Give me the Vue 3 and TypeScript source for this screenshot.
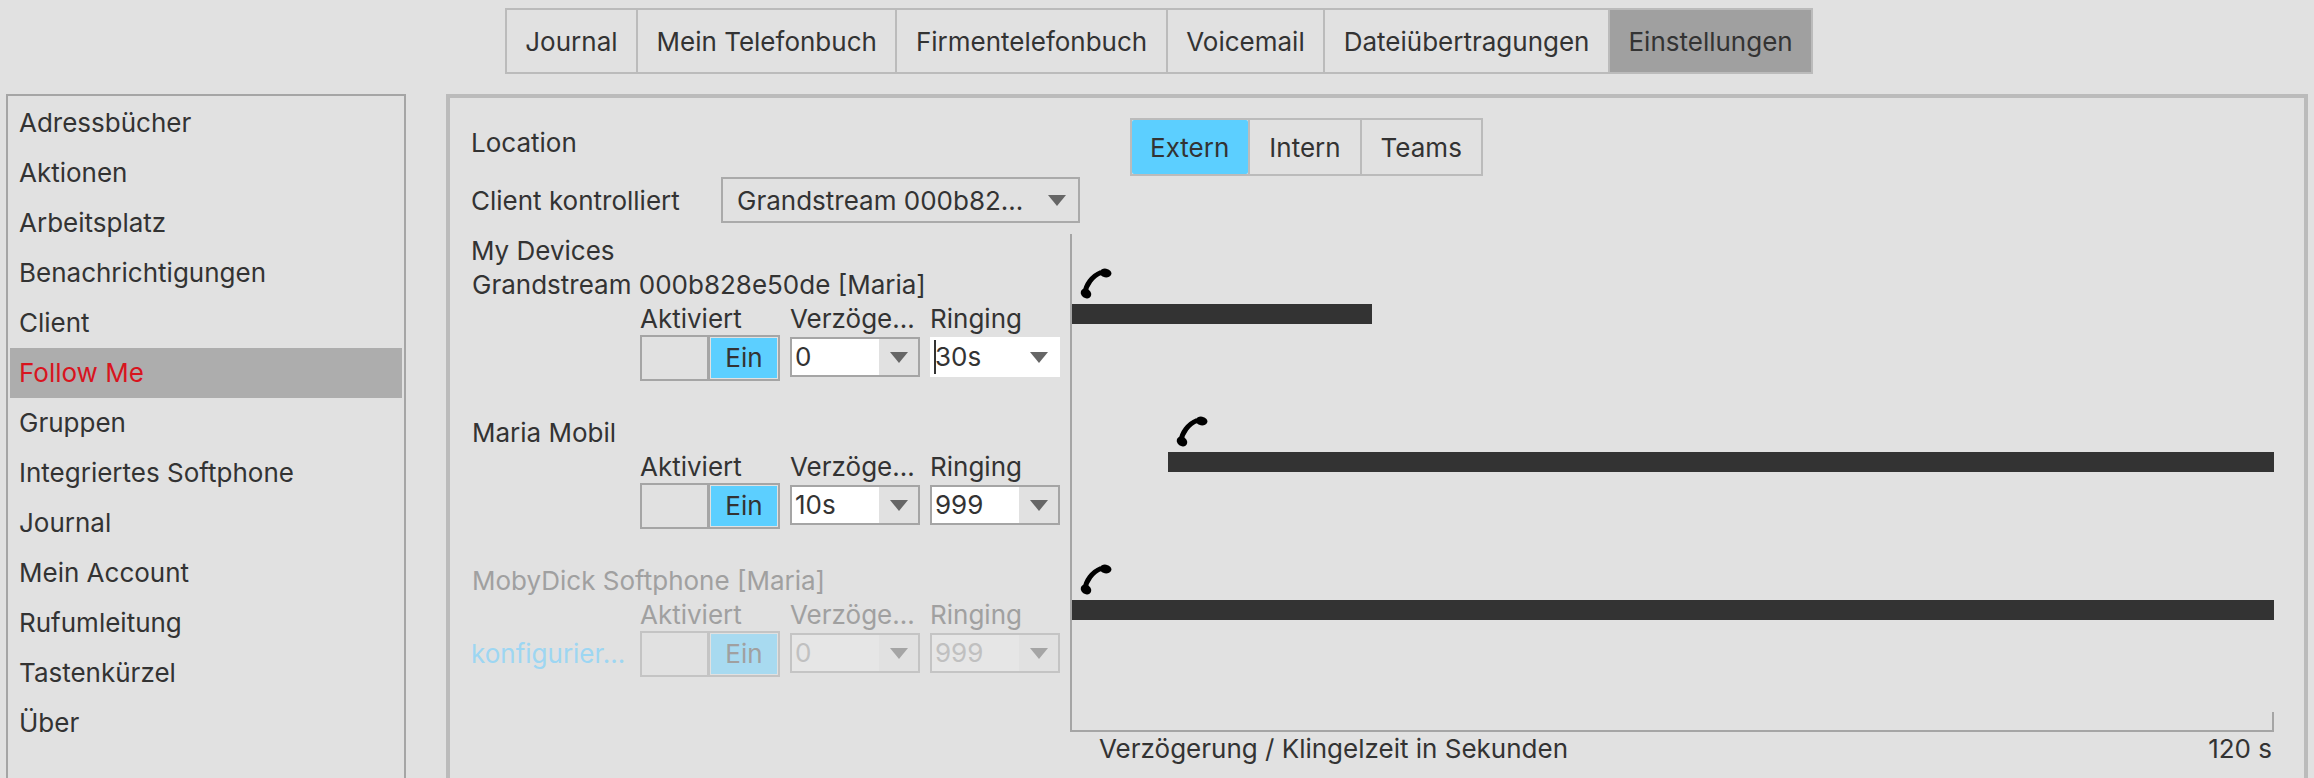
<script setup lang="ts">
interface Device {
  name: string
  delay: string
  ringing: string
  offset: number
  length: number
  focused?: boolean
  disabled?: boolean
  action?: string
}

const tabs = ['Journal', 'Mein Telefonbuch', 'Firmentelefonbuch', 'Voicemail', 'Dateiübertragungen', 'Einstellungen']
const scopes = ['Extern', 'Intern', 'Teams']
const menu = [
  'Adressbücher',
  'Aktionen',
  'Arbeitsplatz',
  'Benachrichtigungen',
  'Client',
  'Follow Me',
  'Gruppen',
  'Integriertes Softphone',
  'Journal',
  'Mein Account',
  'Rufumleitung',
  'Tastenkürzel',
  'Über'
]

const devices: Device[] = [
  { name: 'Grandstream 000b828e50de [Maria]', delay: '0', ringing: '30s', offset: 0, length: 300, focused: true },
  { name: 'Maria Mobil', delay: '10s', ringing: '999', offset: 96, length: 1106 },
  { name: 'MobyDick Softphone [Maria]', delay: '0', ringing: '999', offset: 0, length: 1202, disabled: true, action: 'konfigurier...' }
]
</script>

<template>
  <div class="app">
    <nav class="tabs">
      <div v-for="(tab, i) in tabs" :key="tab" class="tab" :class="{ active: i === tabs.length - 1 }">{{ tab }}</div>
    </nav>

    <main class="main">
      <aside class="sidebar">
        <div v-for="item in menu" :key="item" class="menu-item" :class="{ selected: item === 'Follow Me' }">{{ item }}</div>
      </aside>

      <section class="panel">
        <div class="location-row">
          <div class="location-label">Location</div>
          <div class="scopes">
            <div v-for="(scope, i) in scopes" :key="scope" class="scope" :class="{ active: i === 0 }">{{ scope }}</div>
          </div>
        </div>

        <div class="client-row">
          <div class="client-label">Client kontrolliert</div>
          <div class="client-select">
            <span>Grandstream 000b82...</span>
            <i class="arrow"></i>
          </div>
        </div>

        <div class="body">
          <div class="devices">
            <div class="devices-title">My Devices</div>
            <div v-for="device in devices" :key="device.name" class="device" :class="{ disabled: device.disabled }">
              <div class="device-name">{{ device.name }}</div>
              <div class="fields">
                <div class="field-head first">Aktiviert</div>
                <div class="field-head">Verzöge...</div>
                <div class="field-head">Ringing</div>
                <div class="device-action">{{ device.action }}</div>
                <div class="toggle">
                  <div class="toggle-off"></div>
                  <div class="toggle-on">Ein</div>
                </div>
                <div class="combo">
                  <div class="combo-value">{{ device.delay }}</div>
                  <div class="combo-button"><i class="arrow"></i></div>
                </div>
                <div class="combo" :class="{ focused: device.focused }">
                  <div class="combo-value">
                    <b v-if="device.focused" class="caret"></b>{{ device.ringing }}
                  </div>
                  <div class="combo-button"><i class="arrow"></i></div>
                </div>
              </div>
            </div>
          </div>

          <div class="timeline">
            <div class="chart">
              <div v-for="device in devices" :key="device.name" class="chart-row">
                <svg class="phone" :style="{ marginLeft: device.offset + 8 + 'px' }" viewBox="0 0 32 32" width="32" height="32">
                  <path d="M5 25C6 17 12 8 21 4.500" fill="none" stroke="#000" stroke-width="5" />
                  <ellipse cx="6" cy="25.500" rx="5.500" ry="4.600" transform="rotate(35 6 25.500)" />
                  <ellipse cx="25.500" cy="5" rx="6" ry="4.400" transform="rotate(10 25.500 5)" />
                </svg>
                <div class="bar" :style="{ marginLeft: device.offset + 'px', width: device.length + 'px' }"></div>
              </div>
            </div>
            <div class="axis">
              <span>Verzögerung / Klingelzeit in Sekunden</span>
              <span>120 s</span>
            </div>
          </div>
        </div>
      </section>
    </main>
  </div>
</template>

<style>
html,
body {
  margin: 0;
  background: #e1e1e1;
}
</style>

<style scoped>
.app {
  height: 778px;
  overflow: hidden;
  background: #e1e1e1;
  color: #333;
  font-family: Inter, "Liberation Sans", sans-serif;
  font-size: 26px;
}

/* top tabs */
.tabs {
  display: flex;
  justify-content: center;
  padding: 8px 0 0 6px;
  height: 66px;
  box-sizing: content-box;
}

.tab {
  display: flex;
  align-items: center;
  padding: 0 18.5px;
  border: 2px solid #bbb;
  margin-left: -2px;
  white-space: nowrap;
}

.tab.active {
  background: #a0a0a0;
}

.main {
  display: flex;
  gap: 40px;
  margin: 20px 6px 0;
  height: 700px;
}

/* left menu */
.sidebar {
  width: 392px;
  flex: none;
  padding: 2px;
  border: 2px solid #a5a5a5;
  box-sizing: content-box;
}

.menu-item {
  height: 50px;
  line-height: 50px;
  padding-left: 9px;
}

.menu-item.selected {
  background: #adadad;
  color: #d8141e;
}

/* settings panel */
.panel {
  flex: 1;
  border: 4px solid #bbb;
  border-bottom: 0;
  padding: 20px 0 0 21px;
}

.location-row {
  display: flex;
  height: 58px;
}

.location-label {
  width: 659px;
  line-height: 50px;
}

.scopes {
  display: flex;
  border: 2px solid #bbb;
  height: 58px;
  box-sizing: border-box;
}

.scope {
  display: flex;
  align-items: center;
  padding: 0 19px;
  border-left: 2px solid #bbb;
}

.scope:first-child {
  padding-left: 18px;
  border-left: 0;
}

.scope.active {
  background: #5ccfff;
  border-radius: 2px;
}

.client-row {
  display: flex;
  align-items: center;
  margin-top: 1px;
}

.client-label {
  width: 250px;
}

.client-select {
  display: flex;
  align-items: center;
  justify-content: space-between;
  width: 359px;
  height: 46px;
  padding: 0 12px 0 14px;
  border: 2px solid #aaa;
  box-sizing: border-box;
}

.arrow {
  display: block;
  width: 0;
  height: 0;
  border-left: 9px solid transparent;
  border-right: 9px solid transparent;
  border-top: 11px solid #666;
}

.body {
  display: flex;
  margin-top: 11px;
}

.devices {
  width: 599px;
  flex: none;
}

.devices-title {
  height: 34px;
  line-height: 34px;
}

.device {
  height: 148px;
}

.device-name {
  height: 34px;
  line-height: 34px;
  padding-left: 1px;
}

.fields {
  display: grid;
  grid-template-columns: 169px 150px 140px 130px;
  grid-template-rows: 33px auto;
}

.field-head {
  line-height: 33px;
  white-space: nowrap;
}

.field-head.first {
  grid-column: 2;
}

.device-action {
  line-height: 45px;
  white-space: nowrap;
  color: #9dd6f2;
}

.toggle {
  display: flex;
  width: 140px;
  height: 46px;
  border: 2px solid #a5a5a5;
  box-sizing: border-box;
}

.toggle-off {
  width: 68px;
  border-right: 3px solid #a5a5a5;
  box-sizing: border-box;
}

.toggle-on {
  flex: 1;
  margin: 1px;
  text-align: center;
  line-height: 40px;
  background: #5ccfff;
}

.combo {
  display: flex;
  width: 130px;
  height: 40px;
  margin-top: 2px;
  border: 2px solid #a5a5a5;
  box-sizing: border-box;
}

.combo-value {
  position: relative;
  width: 84px;
  padding-left: 3px;
  line-height: 36px;
  background: #fff;
}

.combo-button {
  flex: 1;
  display: flex;
  align-items: center;
  justify-content: center;
}

.combo.focused {
  border-color: #fff;
  background: #fff;
}

.caret {
  position: absolute;
  left: 2px;
  top: 1px;
  width: 2px;
  height: 34px;
  background: #333;
}

/* disabled device */
.device.disabled {
  color: #a0a0a0;
}

.device.disabled .toggle,
.device.disabled .toggle-off {
  border-color: #c4c4c4;
}

.device.disabled .toggle-on {
  background: #a8daf0;
}

.device.disabled .combo {
  border-color: #c4c4c4;
  color: #c0c0c0;
}

.device.disabled .combo-value {
  background: #e6e6e6;
}

.device.disabled .arrow {
  border-top-color: #a5a5a5;
}

/* timeline */
.timeline {
  width: 1204px;
  flex: none;
}

.chart {
  position: relative;
  height: 498px;
  padding-top: 34px;
  border-left: 2px solid #a5a5a5;
  border-bottom: 2px solid #a5a5a5;
  box-sizing: border-box;
}

.chart::after {
  content: '';
  position: absolute;
  right: 0;
  bottom: 0;
  width: 2px;
  height: 18px;
  background: #a5a5a5;
}

.chart-row {
  height: 148px;
}

.phone {
  display: block;
  filter: blur(0.5px);
}

.bar {
  height: 20px;
  margin-top: 4px;
  background: #333;
}

.axis {
  display: flex;
  justify-content: space-between;
  height: 34px;
  line-height: 34px;
  padding: 0 2px 0 29px;
}
</style>
